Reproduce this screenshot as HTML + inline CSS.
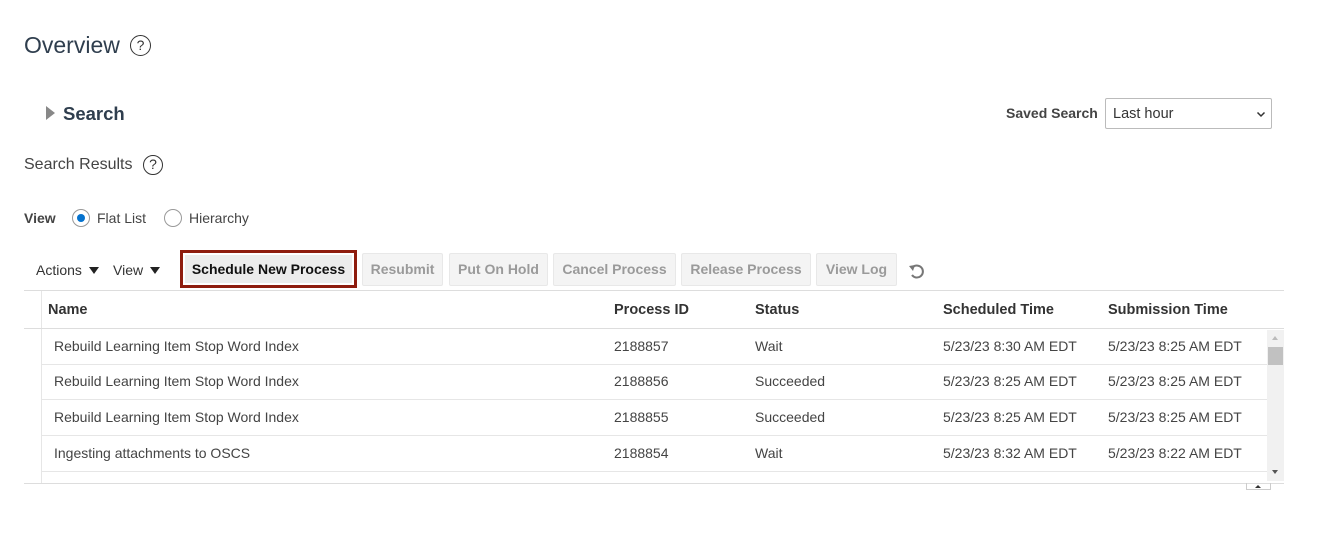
<!DOCTYPE html>
<html><head><style>
*{margin:0;padding:0;box-sizing:border-box}
body{width:1331px;height:546px;background:#fff;font-family:"Liberation Sans",Arial,sans-serif;color:#333;position:relative;overflow:hidden}
.a{position:absolute;white-space:nowrap}
.help{position:absolute;border:1.6px solid #333;border-radius:50%;text-align:center;font-size:14px;line-height:17px;color:#333}
.btn{position:absolute;top:253px;height:33px;background:#f4f4f4;border:1px solid #e8e8e8;border-radius:2px;color:#9a9a9a;font-size:14px;font-weight:bold;line-height:31px;text-align:center}
.th{position:absolute;top:302px;font-size:14.5px;font-weight:bold;color:#333}
.td{position:absolute;font-size:14px;color:#444}
.hl{position:absolute;height:1px;background:#e6e6e6}
</style></head><body>
<div class="a" style="left:24px;top:32px;font-size:23px;color:#2f3e4e">Overview</div>
<div class="help" style="left:130px;top:35px;width:21px;height:21px;line-height:18px">?</div>

<div class="a" style="left:46px;top:106px;width:0;height:0;border-top:7px solid transparent;border-bottom:7px solid transparent;border-left:9px solid #888"></div>
<div class="a" style="left:63px;top:103px;font-size:18.5px;font-weight:bold;color:#2f3e4e">Search</div>

<div class="a" style="left:1006px;top:105px;font-size:14px;font-weight:bold;color:#444">Saved Search</div>
<div class="a" style="left:1105px;top:98px;width:167px;height:31px;border:1px solid #bbb;border-radius:2px;font-size:14.5px;line-height:31px;padding-left:7px;color:#333">Last hour
<svg style="position:absolute;right:5px;top:12px" width="10" height="7" viewBox="0 0 10 7"><path d="M1.5 1.5 L5 5 L8.5 1.5" fill="none" stroke="#333" stroke-width="1.5"/></svg></div>

<div class="a" style="left:24px;top:156px;font-size:16px;color:#444">Search Results</div>
<div class="help" style="left:143px;top:155px;width:20px;height:20px">?</div>

<div class="a" style="left:24px;top:210px;font-size:14px;font-weight:bold;color:#444">View</div>
<div class="a" style="left:72px;top:209px;width:18px;height:18px;border:1px solid #999;border-radius:50%"><div style="position:absolute;left:4px;top:4px;width:8px;height:8px;border-radius:50%;background:#0572ce"></div></div>
<div class="a" style="left:97px;top:210px;font-size:14px;color:#444">Flat List</div>
<div class="a" style="left:164px;top:209px;width:18px;height:18px;border:1px solid #999;border-radius:50%"></div>
<div class="a" style="left:189px;top:210px;font-size:14px;color:#444">Hierarchy</div>

<div class="a" style="left:36px;top:262px;font-size:14px;color:#333">Actions</div>
<div class="a" style="left:89px;top:267px;border-left:5px solid transparent;border-right:5px solid transparent;border-top:7px solid #222"></div>
<div class="a" style="left:113px;top:262px;font-size:14px;color:#333">View</div>
<div class="a" style="left:150px;top:267px;border-left:5px solid transparent;border-right:5px solid transparent;border-top:7px solid #222"></div>

<div class="a" style="left:180px;top:250px;width:177px;height:38px;border:3px solid #8e1c0e;background:#fff;padding:2px">
<div style="background:#ececec;height:28px;line-height:28px;text-align:center;font-size:14px;font-weight:bold;color:#111">Schedule New Process</div></div>
<div class="btn" style="left:362px;width:81px">Resubmit</div>
<div class="btn" style="left:449px;width:99px">Put On Hold</div>
<div class="btn" style="left:553px;width:123px">Cancel Process</div>
<div class="btn" style="left:681px;width:130px">Release Process</div>
<div class="btn" style="left:816px;width:81px">View Log</div>
<svg class="a" style="left:907px;top:261px" width="20" height="20" viewBox="0 0 20 20"><path d="M6 6 A6 6 0 1 1 5 14" fill="none" stroke="#777" stroke-width="2"/><path d="M2 5 L8 4 L6 10 Z" fill="#777"/></svg>

<div class="hl" style="left:24px;top:290px;width:1260px;background:#ddd"></div>
<div class="a" style="left:41px;top:291px;width:1px;height:192px;background:#e6e6e6"></div>
<div class="th" style="left:48px">Name</div>
<div class="th" style="left:614px">Process ID</div>
<div class="th" style="left:755px">Status</div>
<div class="th" style="left:943px">Scheduled Time</div>
<div class="th" style="left:1108px">Submission Time</div>
<div class="hl" style="left:24px;top:328px;width:1260px;background:#ddd"></div>

<div class="td" style="left:54px;top:338px">Rebuild Learning Item Stop Word Index</div>
<div class="td" style="left:614px;top:338px">2188857</div>
<div class="td" style="left:755px;top:338px">Wait</div>
<div class="td" style="left:943px;top:338px">5/23/23 8:30 AM EDT</div>
<div class="td" style="left:1108px;top:338px">5/23/23 8:25 AM EDT</div>
<div class="hl" style="left:42px;top:364px;width:1225px"></div>
<div class="td" style="left:54px;top:373px">Rebuild Learning Item Stop Word Index</div>
<div class="td" style="left:614px;top:373px">2188856</div>
<div class="td" style="left:755px;top:373px">Succeeded</div>
<div class="td" style="left:943px;top:373px">5/23/23 8:25 AM EDT</div>
<div class="td" style="left:1108px;top:373px">5/23/23 8:25 AM EDT</div>
<div class="hl" style="left:42px;top:399px;width:1225px"></div>
<div class="td" style="left:54px;top:409px">Rebuild Learning Item Stop Word Index</div>
<div class="td" style="left:614px;top:409px">2188855</div>
<div class="td" style="left:755px;top:409px">Succeeded</div>
<div class="td" style="left:943px;top:409px">5/23/23 8:25 AM EDT</div>
<div class="td" style="left:1108px;top:409px">5/23/23 8:25 AM EDT</div>
<div class="hl" style="left:42px;top:435px;width:1225px"></div>
<div class="td" style="left:54px;top:445px">Ingesting attachments to OSCS</div>
<div class="td" style="left:614px;top:445px">2188854</div>
<div class="td" style="left:755px;top:445px">Wait</div>
<div class="td" style="left:943px;top:445px">5/23/23 8:32 AM EDT</div>
<div class="td" style="left:1108px;top:445px">5/23/23 8:22 AM EDT</div>
<div class="hl" style="left:42px;top:471px;width:1225px"></div>

<div class="a" style="left:1267px;top:330px;width:17px;height:151px;background:#f1f1f1"></div>
<div class="a" style="left:1272px;top:336px;border-left:3px solid transparent;border-right:3px solid transparent;border-bottom:4px solid #bbb"></div>
<div class="a" style="left:1268px;top:347px;width:15px;height:18px;background:#c1c1c1"></div>
<div class="a" style="left:1272px;top:470px;border-left:3px solid transparent;border-right:3px solid transparent;border-top:4px solid #555"></div>
<div class="hl" style="left:24px;top:483px;width:1260px;background:#ddd"></div>
<div class="a" style="left:1246px;top:483px;width:25px;height:7px;border:1px solid #ccc;border-top:none"></div>
<div class="a" style="left:1255px;top:485px;border-left:3px solid transparent;border-right:3px solid transparent;border-bottom:3px solid #333"></div>
</body></html>
